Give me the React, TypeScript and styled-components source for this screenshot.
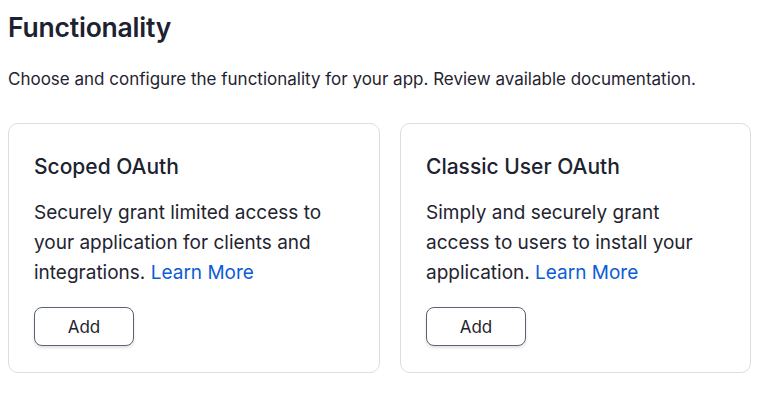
import React from "react";
import styled, { createGlobalStyle } from "styled-components";

const Global = createGlobalStyle`
  html, body { margin: 0; padding: 0; background: #ffffff; }
  body { font-family: Inter, "Noto Sans", sans-serif; color: #1f2430; -webkit-font-smoothing: antialiased; }
  * { box-sizing: border-box; }
`;

const Page = styled.div`
  padding: 10px 8px 0 8px;
  width: 760px;
`;

const Title = styled.h1`
  margin: 0;
  font-size: 26.5px;
  line-height: 34px;
  font-weight: 600;
  letter-spacing: -0.2px;
  color: #1d2230;
`;

const Intro = styled.p`
  margin: 24px 0 0 0;
  font-size: 17px;
  line-height: 22px;
  color: #1f2430;
`;

const Grid = styled.div`
  margin-top: 33px;
  display: grid;
  grid-template-columns: 372px 351px;
  gap: 20px;
`;

const Card = styled.section`
  border: 1px solid #dcdde0;
  border-radius: 10px;
  padding: 28px 25px 25px 25px;
  height: 250px;
`;

const CardTitle = styled.h2`
  margin: 0;
  font-size: 21px;
  line-height: 30px;
  font-weight: 500;
  color: #1d2230;
`;

const CardText = styled.p`
  margin: 16px 0 0 0;
  font-size: 19px;
  line-height: 30px;
  color: #1f2430;
`;

const Link = styled.a`
  color: #0b5cd7;
  text-decoration: none;
`;

const AddButton = styled.button`
  margin-top: 19px;
  width: 100px;
  height: 39px;
  border: 1px solid #5b6475;
  border-radius: 8px;
  background: #ffffff;
  font-family: inherit;
  font-size: 17px;
  color: #1f2430;
  box-shadow: 0 2px 3px rgba(0, 0, 0, 0.12);
  cursor: pointer;
`;

const cards = [
  {
    title: "Scoped OAuth",
    text: "Securely grant limited access to your application for clients and integrations.",
  },
  {
    title: "Classic User OAuth",
    text: "Simply and securely grant access to users to install your application.",
  },
];

export default function App() {
  return (
    <>
      <Global />
      <Page>
        <Title>Functionality</Title>
        <Intro>
          Choose and configure the functionality for your app. Review available documentation.
        </Intro>
        <Grid>
          {cards.map((c) => (
            <Card key={c.title}>
              <CardTitle>{c.title}</CardTitle>
              <CardText>
                {c.text} <Link href="#">Learn More</Link>
              </CardText>
              <AddButton>Add</AddButton>
            </Card>
          ))}
        </Grid>
      </Page>
    </>
  );
}
